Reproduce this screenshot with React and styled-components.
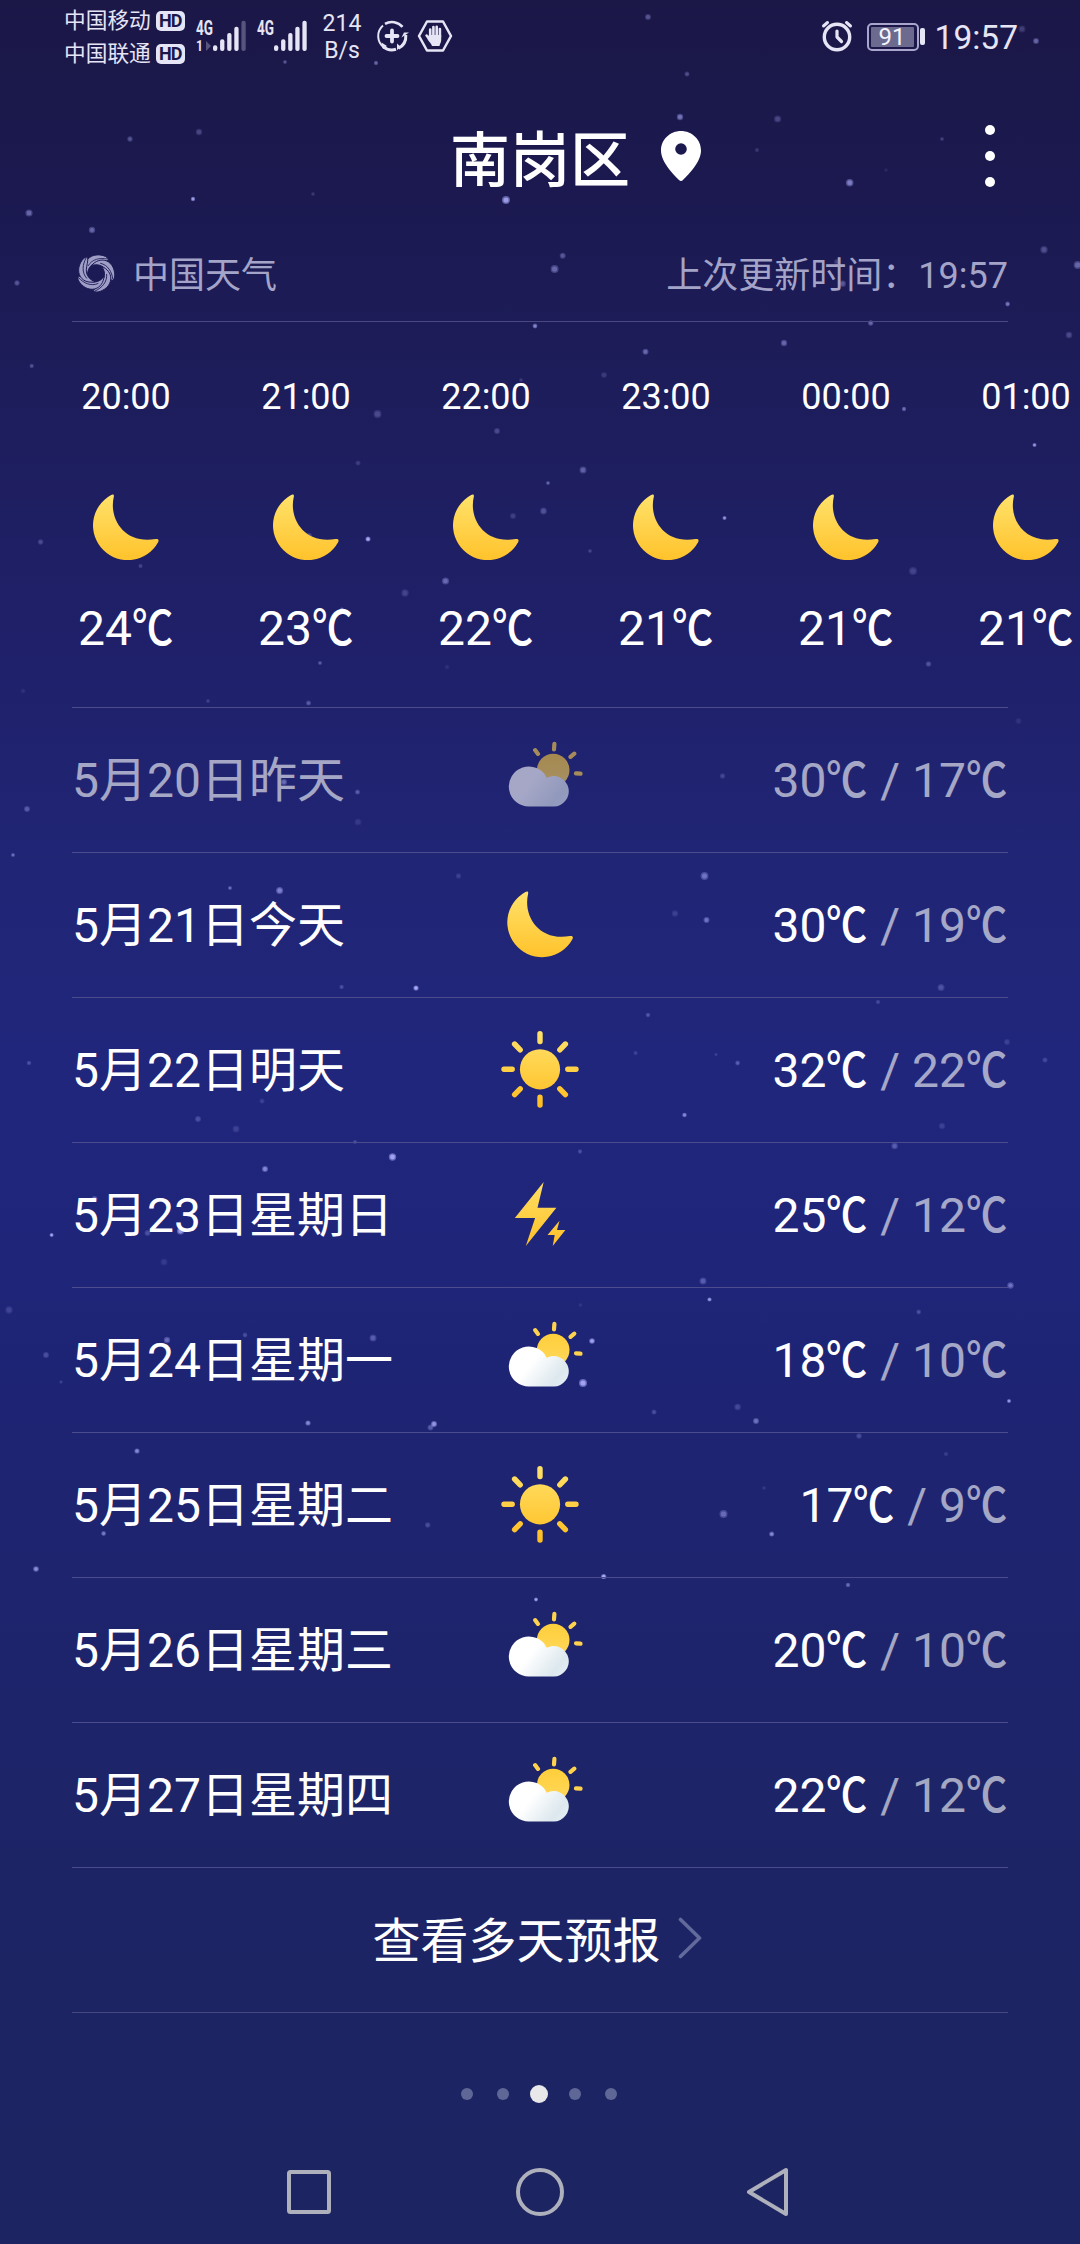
import styled, { createGlobalStyle } from 'styled-components'

const GlobalStyle = createGlobalStyle`
    * { box-sizing: border-box; }
    body {
        margin: 0;
        background: #1c2461;
    }
`

const Screen = styled.main`
    position: relative;
    display: flex;
    flex-direction: column;
    width: 1080px;
    height: 2244px;
    overflow: hidden;
    color: #fff;
    font-family: Roboto, 'Noto Sans CJK SC', sans-serif;
    background: linear-gradient(#1b1747 0, #1b1950 200px, #1d1d5b 380px, #1f2069 640px, #202575 860px, #20267c 1080px, #1f2579 1260px, #1e2473 1400px, #1e246c 1640px, #1d2466 1860px, #1c2461 2244px);
`

const Sky = styled.svg`
    position: absolute;
    inset: 0;
`

const StatusBar = styled.div`
    position: relative;
    display: flex;
    height: 75px;
    padding: 4px 62px 0 64px;
    color: #e6e5f5;
`

const Carriers = styled.div`
    display: flex;
    flex-direction: column;
    width: 131px;
`

const Carrier = styled.div`
    display: flex;
    align-items: center;
    gap: 5px;
    height: 33px;
    font-size: 21.7px;
    line-height: 33px;
    white-space: nowrap;
`

const Badge = styled.span`
    display: flex;
    align-items: center;
    justify-content: center;
    width: 29px;
    height: 20px;
    border-radius: 5px;
    background: #e6e5f5;
    color: #1b1848;
    font-size: 18px;
    font-weight: 700;
    letter-spacing: -1px;
    line-height: 20px;
`

const Signal = styled.svg`
    width: 52px;
    height: 34px;
    margin: 14px 9px 0 0;
    overflow: visible;
    font-family: Roboto, sans-serif;
    font-weight: 700;
    fill: #e6e5f5;
`

const Speed = styled.div`
    width: 50px;
    margin: 6px 7px 0 0;
    font-size: 23px;
    line-height: 27px;
    text-align: center;
`

const StatusIcon = styled.svg`
    flex: none;
    width: 36px;
    height: 36px;
    margin: 14px ${({ $gap }) => $gap || 0}px 0 0;
`

const StatusRight = styled.div`
    display: flex;
    margin-left: auto;
`

const Battery = styled.div`
    display: flex;
    width: 52px;
    height: 28px;
    margin: 19px 0 0 0;
    padding: 2px;
    border: 2px solid #a9a5cc;
    border-radius: 5px;
`

const Charge = styled.div`
    width: 43px;
    background: #6d6a90;
    border-radius: 1px;
    font-size: 24px;
    line-height: 21px;
    text-align: center;
    color: #f4f4fc;
`

const BatteryTip = styled.div`
    width: 5px;
    height: 17px;
    margin: 24px 10px 0 1px;
    border-radius: 2px;
    background: #e6e5f5;
`

const Clock = styled.div`
    margin-top: 14px;
    font-size: 33.5px;
    line-height: 40px;
`

const Header = styled.header`
    position: relative;
    display: flex;
    align-items: center;
    height: 162px;
    padding: 0 85px 0 450px;
`

const Title = styled.h1`
    margin: 11px 28px 0 0;
    font-size: 60px;
    font-weight: 500;
    line-height: 80px;
`

const Pin = styled.svg`
    width: 46px;
    height: 52px;
`

const Menu = styled.div`
    display: flex;
    flex-direction: column;
    gap: 16px;
    margin-left: auto;

    span {
        width: 10px;
        height: 10px;
        border-radius: 50%;
        background: #fff;
    }
`

const Source = styled.div`
    position: relative;
    display: flex;
    align-items: center;
    height: 85px;
    margin: 0 72px;
    padding: 2px 0 8px 5px;
    border-bottom: 1px solid #494882;
    color: #a4a3c8;
    font-size: 36px;
    line-height: 48px;

    svg {
        width: 38px;
        height: 38px;
        margin: -7px 18px 0 0;
    }

    time {
        margin-left: auto;
    }
`

const Hours = styled.section`
    position: relative;
    display: flex;
    height: 385px;
    padding-left: 36px;
`

const Hour = styled.div`
    flex: none;
    display: flex;
    flex-direction: column;
    align-items: center;
    width: 180px;
    padding-top: 51px;
    font-size: 36px;
    line-height: 48px;

    svg {
        margin: 73px 0 39px;
    }
`

const Temp = styled.span`
    font-size: 48px;
    line-height: 60px;
`

const Unit = styled.span`
    display: inline-block;
    width: 48px;
    margin-right: -6px;
    font-weight: 500;
    transform: scaleX(0.86);
    transform-origin: left;
`

const Days = styled.section`
    position: relative;
    margin: 0 72px;
    border-top: 1px solid #4c4b8b;
`

const Day = styled.div`
    display: grid;
    grid-template-columns: 1fr 78px 1fr;
    align-items: center;
    height: 145px;
    border-bottom: 1px solid #4a4c8d;
    font-size: 48px;
    line-height: 60px;
    white-space: nowrap;

    > * {
        opacity: ${({ $past }) => ($past ? 0.6 : 1)};
    }

    svg {
        overflow: visible;
    }
`

const DateLabel = styled.span`
    padding-top: 2px;
`

const Range = styled.div`
    padding-top: 2px;
    text-align: right;

    i {
        font-style: normal;
        opacity: ${({ $past }) => ($past ? 1 : 0.6)};
    }
`

const More = styled.div`
    display: flex;
    align-items: center;
    justify-content: center;
    gap: 17px;
    height: 145px;
    padding: 3px 6px 0 0;
    border-bottom: 1px solid #45487f;
    font-size: 48px;
    line-height: 60px;

    svg {
        width: 24px;
        height: 42px;
        margin-top: -7px;
    }
`

const Pager = styled.div`
    position: relative;
    display: flex;
    align-items: center;
    justify-content: center;
    height: 153px;
    padding: 9px 3px 0 0;
`

const Dot = styled.span`
    width: ${({ $active }) => ($active ? 18 : 12)}px;
    height: ${({ $active }) => ($active ? 18 : 12)}px;
    margin: 0 ${({ $active }) => ($active ? 9 : 12)}px;
    border-radius: 50%;
    background: ${({ $active }) => ($active ? '#e8e8ea' : '#5f6796')};
`

const NavBar = styled.nav`
    position: relative;
    display: flex;
    justify-content: space-between;
    padding: 0 284px 0 283px;

    svg {
        width: 52px;
        height: 52px;
        fill: none;
        stroke: #aeb0bb;
        stroke-width: 4;
        stroke-linejoin: round;
    }
`

// x, y, radius, opacity
const stars = [
    [648, 17, 3, 0.4], [285, 62, 2, 0.4], [376, 63, 2.2, 0.5], [1036, 41, 3, 0.5], [1022, 29, 3.5, 0.25],
    [687, 74, 2.5, 0.35], [130, 139, 2.7, 0.4], [199, 132, 3.2, 0.3], [193, 199, 2.2, 0.85], [313, 194, 2, 0.2],
    [92, 230, 3.2, 0.5], [506, 200, 4, 0.85], [554.6, 269, 4, 0.5], [535, 326, 2.4, 0.7], [680, 117, 3.2, 0.6],
    [777.6, 119, 3.6, 0.3], [757, 150, 2.2, 0.2], [942, 139, 2, 0.25], [849.7, 182.7, 3.8, 0.65], [562.7, 255.7, 3, 0.4],
    [1044, 249.7, 3.7, 0.35], [1077.7, 265, 4, 0.5], [1007.6, 304, 2.4, 0.6], [870.7, 323, 2.7, 0.5], [1069, 335, 3.3, 0.3],
    [842.7, 283.7, 3.2, 0.4], [836.7, 261.7, 2.7, 0.25], [29, 213, 3.6, 0.5], [17, 283, 2.7, 0.4], [886, 170, 2, 0.1],
    [31.7, 366, 2.2, 0.35], [645.5, 351.7, 3, 0.5], [784, 343, 3.2, 0.5], [904, 409, 2.2, 0.55], [377.5, 414, 4, 0.3],
    [604, 375, 3, 0.2], [521, 380, 2, 0.2], [497, 431, 3, 0.3], [1034.5, 445, 2, 0.8], [358, 463, 2.5, 0.22],
    [583, 470, 3.5, 0.45], [548, 483, 2, 0.45], [543.5, 511, 3.4, 0.35], [513, 516, 3, 0.22], [724.5, 518, 2, 0.8],
    [40.6, 542, 2.7, 0.3], [309, 536, 3, 0.35], [368, 539, 2.5, 0.95], [590, 551, 2, 0.25], [140.5, 566, 2.2, 0.25],
    [913, 571, 4, 0.25], [445.5, 581, 3.6, 0.5], [405, 593, 3.7, 0.25], [342, 609.5, 2, 0.7], [320, 663, 2, 0.4],
    [928.5, 664, 2.8, 0.35], [447, 667, 2.5, 0.1], [308.5, 703, 2.5, 0.4], [208, 701, 2, 0.22], [23, 691, 2.5, 0.1],
    [1018.5, 721, 3, 0.12], [722.5, 776, 2.7, 0.25], [284, 782, 3, 0.5], [357.5, 792, 2.5, 0.4], [358, 822, 3.5, 0.15],
    [27, 809, 3, 0.4], [13, 855, 2, 0.5], [704.5, 876, 3.9, 0.55], [706.5, 920, 3, 0.55], [675, 913.5, 3.2, 0.2],
    [458.5, 876, 2.7, 0.2], [279.6, 890.5, 3.5, 0.65], [230, 888, 2, 0.5], [416, 988, 2.6, 0.95], [341.6, 987, 2.2, 0.3],
    [941, 987.5, 3.5, 0.32], [878, 1002, 2.2, 0.25], [648, 1015, 2.3, 0.35], [635.6, 1053, 2.2, 0.2], [737.6, 1063, 2.4, 0.4],
    [716, 1054.5, 1.7, 0.2], [1007, 1042, 3, 0.2], [1045, 1060, 2.6, 0.25], [29, 1063, 2.3, 0.3], [684.5, 1115, 2.3, 0.7],
    [942, 1126, 3.2, 0.2], [198, 1119, 3, 0.3], [262, 1101, 2.5, 0.2], [236, 1129, 3.5, 0.2], [355, 1142, 2, 0.3],
    [894.6, 1146, 3.2, 0.4], [580, 1151.5, 2.2, 0.3], [265, 1169, 3, 0.7], [392.5, 1157, 3.7, 0.9], [94.5, 1199, 3, 0.5],
    [180.5, 1231, 3.5, 0.8], [147.5, 1233, 3, 0.3], [51.6, 1235, 2, 0.9], [164, 1262, 3.5, 0.15], [703, 1281, 3.5, 0.4],
    [709.5, 1299.5, 2.1, 0.85], [1010.5, 1285.5, 3.2, 0.55], [918.7, 1312, 2.4, 0.3], [9, 1310, 3.7, 0.22], [580.5, 1305, 2, 0.12],
    [592, 1341, 2.8, 0.9], [583, 1383, 4, 0.9], [654, 1412, 2.5, 0.3], [737.6, 1407, 3.3, 0.25], [756, 1421, 3, 0.55],
    [1009, 1401, 2, 0.8], [859, 1436, 2.8, 0.3], [946, 1454, 2.3, 0.18], [723.5, 1514, 4, 0.5], [771.7, 1534, 2.5, 0.7],
    [764, 1488, 2, 0.15], [46, 1355, 3, 0.3], [167, 1340, 3.2, 0.5], [245, 1335, 2.4, 0.3], [373, 1338, 3.5, 0.4],
    [308, 1423, 2.6, 0.7], [434, 1424, 3, 0.8], [430.5, 1427.5, 3, 0.4], [137, 1451, 2.6, 0.7], [103.6, 1533.5, 2.4, 0.6],
    [36, 1569, 2.8, 0.75], [427.7, 1525, 2.7, 0.3], [536, 1599.5, 2, 0.9], [603.7, 1576.5, 2.6, 0.95], [848, 1585, 2.3, 0.5],
    [61, 1382, 1.8, 0.2],
]

const hours = [
    ['20:00', 24],
    ['21:00', 23],
    ['22:00', 22],
    ['23:00', 21],
    ['00:00', 21],
    ['01:00', 21],
]

const days = [
    { date: '5月20日昨天', icon: 'cloudy', high: 30, low: 17, past: true },
    { date: '5月21日今天', icon: 'moon', high: 30, low: 19 },
    { date: '5月22日明天', icon: 'sun', high: 32, low: 22 },
    { date: '5月23日星期日', icon: 'storm', high: 25, low: 12 },
    { date: '5月24日星期一', icon: 'cloudy', high: 18, low: 10 },
    { date: '5月25日星期二', icon: 'sun', high: 17, low: 9 },
    { date: '5月26日星期三', icon: 'cloudy', high: 20, low: 10 },
    { date: '5月27日星期四', icon: 'cloudy', high: 22, low: 12 },
]

const moonPath = 'M17 1.2C19.3-.2 20.6.4 20.1 2.8C15 24 30 50.500 62 45C64.600 44.600 65.600 46 64.400 48.200A34.700 34.700 0 1 1 17 1.200Z'

function Gradients() {
    return (
        <svg width="0" height="0" style={{ position: 'absolute' }}>
            <defs>
                <linearGradient id="gold" x1="0" y1="0" x2="0" y2="78" gradientUnits="userSpaceOnUse">
                    <stop offset="0" stopColor="#ffe26b" />
                    <stop offset="1" stopColor="#ffbd20" />
                </linearGradient>
                <linearGradient id="warm" x1="0" y1="0" x2="0" y2="1">
                    <stop offset="0" stopColor="#ffce3a" />
                    <stop offset="1" stopColor="#ffd85c" />
                </linearGradient>
                <linearGradient id="cloud" x1="8" y1="28" x2="58" y2="68" gradientUnits="userSpaceOnUse">
                    <stop offset="0.3" stopColor="#fff" />
                    <stop offset="0.75" stopColor="#dde8ee" />
                    <stop offset="1" stopColor="#e6eef6" />
                </linearGradient>
            </defs>
        </svg>
    )
}

function WeatherIcon({ name }) {
    return (
        <svg width="78" height="78" viewBox="0 0 78 78">
            {name === 'moon' ? <path d={moonPath} transform="translate(7 5)" fill="url(#gold)" /> : null}
            {name === 'sun' ? (
                <g fill="none" stroke="url(#gold)" strokeWidth="5.4" strokeLinecap="round">
                    <circle cx="39" cy="38.300" r="20.100" fill="url(#gold)" stroke="none" />
                    <path d="M38.990 2.700L39.010 10.500M38.990 66.200L39.010 74M3 38.290L11.200 38.310M66.800 38.290L75 38.310M13.600 13L19.200 18.800M64.400 13L58.800 18.800M13.600 63.600L19.200 57.800M64.400 63.600L58.800 57.800" />
                </g>
            ) : null}
            {name === 'storm' ? (
                <path fill="url(#gold)" d="M42.700 6L13.800 42H34.100L24.800 70L55.400 31.700H36.500ZM58.500 44.700L46.500 59H53.700L51.700 70L64.400 54H56Z" />
            ) : null}
            {name === 'cloudy' ? (
                <g transform="translate(8.500 .500)">
                    <circle cx="43.700" cy="28.600" r="16.300" fill="url(#warm)" />
                    <path d="M44.900 2.400L44.500 7.800M25.600 8.600L28.500 12.400M64.800 12.200L61 15.300M66.500 31.800L71 32.200" stroke="#ffd24e" strokeWidth="4.200" strokeLinecap="round" />
                    <path d="M20 65A20 20 0 1 1 37.300 36.200A15.200 15.200 0 1 1 44.300 65Z" fill="url(#cloud)" />
                </g>
            ) : null}
        </svg>
    )
}

function Degrees({ value }) {
    return (
        <>{value}<Unit>℃</Unit></>
    )
}

function SignalIcon({ roaming }) {
    return (
        <Signal viewBox="0 0 52 34">
            <text x="1" y="16.500" fontSize="20" textLength="17" lengthAdjust="spacingAndGlyphs">4G</text>
            {roaming ? <text x="1" y="33" fontSize="14" textLength="7" lengthAdjust="spacingAndGlyphs">1</text> : null}
            {roaming ? <path d="M11 23L16 28L11 33Z" opacity=".3" /> : null}
            {[0, 1, 2, 3, 4].map((i) => (
                <rect key={i} x={18 + i * 7.1} y={27.3 - i * 6.15} width="4.300" height={5.7 + i * 6.15} rx="2" opacity={roaming && i === 4 ? 0.3 : 1} />
            ))}
        </Signal>
    )
}

function Swirl() {
    return (
        <svg viewBox="-19 -19 38 38">
            {[0, 72, 144, 216, 288].map((angle) => (
                <g key={angle} transform={`rotate(${angle})`}>
                    <path d="M9.500 -16.500C4 -19 -4 -19 -8.500 -13.500C-12 -9 -11.500 -3 -8.500 2C-8.500 -4 -5.500 -8.500 0 -10.200C4 -11.300 9 -11 12.500 -12.800C12 -14.500 11 -15.800 9.500 -16.500Z" fill="#9f9ec7" stroke="#1b1a54" strokeWidth=".9" />
                    <path d="M11.500 -14C4 -15.500 -4 -14 -8 -7" fill="none" stroke="#1b1a54" strokeWidth=".8" />
                </g>
            ))}
        </svg>
    )
}

function App() {
    return (
        <Screen>
            <GlobalStyle />
            <Gradients />
            <Sky width="1080" height="2244" fill="#b0b0ff">
                {stars.map(([x, y, r, o]) => (
                    <g key={`${x}-${y}`} opacity={o}>
                        <circle cx={x} cy={y} r={r} opacity=".55" />
                        <circle cx={x} cy={y} r={r * 0.65} />
                    </g>
                ))}
            </Sky>

            <StatusBar>
                <Carriers>
                    <Carrier>中国移动<Badge>HD</Badge></Carrier>
                    <Carrier>中国联通<Badge>HD</Badge></Carrier>
                </Carriers>
                <SignalIcon roaming />
                <SignalIcon />
                <Speed>214<br />B/s</Speed>
                <StatusIcon $gap={7} viewBox="-18 -18 36 36" fill="none" stroke="#e6e5f5">
                    <path d="M-5.500 0H5.500M0 -5.500V5.500" strokeWidth="3.800" strokeLinecap="round" />
                    <path d="M-9 -10.500A14 14 0 0 0 -8 11.400" strokeWidth="2" />
                    <path d="M-7 -12.200A14 14 0 0 1 10.500 -9.200" strokeWidth="2.600" />
                    <path d="M13.800 -1A14 14 0 0 1 6.500 12.300M4 13.300A14 14 0 0 1 -9 10.700" strokeWidth="3" />
                    <path d="M9.500 1.500L12 -3.500H17ZM5 7.500L9 11L5 14ZM-10.500 6.500L-5 10L-9 13Z" fill="#e6e5f5" stroke="none" />
                </StatusIcon>
                <StatusIcon viewBox="-18 -18 36 36">
                    <path d="M-8 -14.500H8L16 0L8 14.500H-8L-16 0Z" fill="none" stroke="#e6e5f5" strokeWidth="2.500" strokeLinejoin="round" />
                    <path d="M-4.800 -6.500V1M-1.600 -9V0M1.700 -9.200V0M4.900 -7V1M-8.400 -.500L-5 4" stroke="#e6e5f5" strokeWidth="2.600" strokeLinecap="round" />
                    <path d="M-6.100 -1H6.200V4C6.200 6.500 5 7.500 4.500 10H-3C-3.500 7.500 -6.500 5.500 -7.500 3Z" fill="#e6e5f5" />
                </StatusIcon>
                <StatusRight>
                    <StatusIcon $gap={12} viewBox="-18 -19 36 36" fill="none" stroke="#e6e5f5" strokeLinecap="round">
                        <circle r="12.700" strokeWidth="3.400" />
                        <path d="M0 -6V0L4.500 4.500" strokeWidth="3.200" strokeLinejoin="round" />
                        <path d="M-13.500 -11L-9.500 -14.500M13.500 -11L9.500 -14.500" strokeWidth="3" />
                    </StatusIcon>
                    <Battery><Charge>91</Charge></Battery>
                    <BatteryTip />
                    <Clock>19:57</Clock>
                </StatusRight>
            </StatusBar>

            <Header>
                <Title>南岗区</Title>
                <Pin viewBox="0 0 46 52">
                    <path fill="#fff" fillRule="evenodd" d="M23 1C34 1 43 9.500 43 20.500C43 32 31 44 25 50C23.700 51.200 22.300 51.200 21 50C15 44 3 32 3 20.500C3 9.500 12 1 23 1ZM23 13.200A5.800 5.800 0 1 0 23 24.800A5.800 5.800 0 1 0 23 13.200Z" />
                </Pin>
                <Menu><span /><span /><span /></Menu>
            </Header>

            <Source>
                <Swirl />
                <span>中国天气</span>
                <time>上次更新时间：19:57</time>
            </Source>

            <Hours>
                {hours.map(([time, temp]) => (
                    <Hour key={time}>
                        <span>{time}</span>
                        <svg width="66" height="66" viewBox="-.700 0 66 66"><path d={moonPath} fill="url(#gold)" /></svg>
                        <Temp><Degrees value={temp} /></Temp>
                    </Hour>
                ))}
            </Hours>

            <Days>
                {days.map(({ date, icon, high, low, past }) => (
                    <Day key={date} $past={past}>
                        <DateLabel>{date}</DateLabel>
                        <WeatherIcon name={icon} />
                        <Range $past={past}>
                            <Degrees value={high} /><i> / <Degrees value={low} /></i>
                        </Range>
                    </Day>
                ))}
                <More>
                    查看多天预报
                    <svg viewBox="0 0 24 42" fill="none" stroke="#626a9c" strokeWidth="3.600" strokeLinecap="round" strokeLinejoin="round">
                        <path d="M2.500 2.500L21.500 21L2.500 39.500" />
                    </svg>
                </More>
            </Days>

            <Pager>
                <Dot />
                <Dot />
                <Dot $active />
                <Dot />
                <Dot />
            </Pager>

            <NavBar>
                <svg viewBox="-26 -26 52 52"><rect x="-20" y="-20" width="40" height="40" rx="1.500" /></svg>
                <svg viewBox="-26 -26 52 52"><circle r="22" /></svg>
                <svg viewBox="-24 -26 52 52"><path d="M18 -22V22L-19 0Z" /></svg>
            </NavBar>
        </Screen>
    )
}

export default App
